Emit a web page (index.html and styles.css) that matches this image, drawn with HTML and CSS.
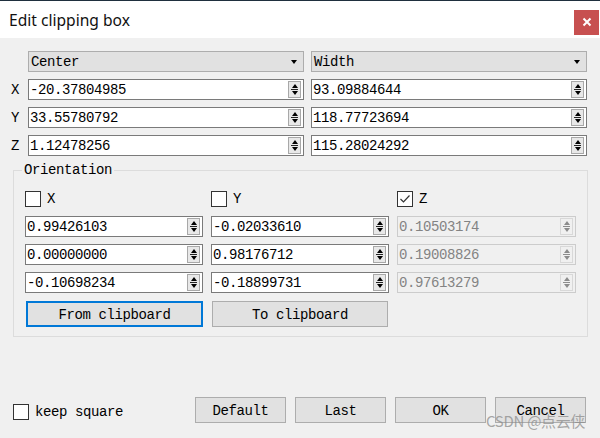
FILE: index.html
```html
<!DOCTYPE html>
<html>
<head>
<meta charset="utf-8">
<link rel="stylesheet" href="styles.css">
</head>
<body>
<div class="window">
  <header class="titlebar">
    <span class="title">Edit clipping box</span>
    <button class="close" aria-label="Close">
      <svg width="10" height="10" viewBox="0 0 10 10"><path d="M1.5 1.5 L8.5 8.5 M8.5 1.5 L1.5 8.5" stroke="#fff" stroke-width="2" fill="none"/></svg>
    </button>
  </header>
  <main class="body">
    <div class="box-grid">
      <span></span>
      <div class="combo"><span>Center</span><span class="caret"></span></div>
      <div class="combo"><span>Width</span><span class="caret"></span></div>

      <span class="axis">X</span>
      <div class="spin"><span class="val">-20.37804985</span><span class="arrows"></span></div>
      <div class="spin"><span class="val">93.09884644</span><span class="arrows"></span></div>

      <span class="axis">Y</span>
      <div class="spin"><span class="val">33.55780792</span><span class="arrows"></span></div>
      <div class="spin"><span class="val">118.77723694</span><span class="arrows"></span></div>

      <span class="axis">Z</span>
      <div class="spin"><span class="val">1.12478256</span><span class="arrows"></span></div>
      <div class="spin"><span class="val">115.28024292</span><span class="arrows"></span></div>
    </div>

    <fieldset class="group">
      <legend>Orientation</legend>
      <div class="orient-grid">
        <label class="check"><span class="box"></span>X</label>
        <label class="check"><span class="box"></span>Y</label>
        <label class="check"><span class="box checked"><svg width="14" height="14" viewBox="0 0 14 14"><path d="M2.5 7 L5.5 10 L11.5 3.5" stroke="#333" stroke-width="1.2" fill="none"/></svg></span>Z</label>

        <div class="spin"><span class="val">0.99426103</span><span class="arrows"></span></div>
        <div class="spin"><span class="val">-0.02033610</span><span class="arrows"></span></div>
        <div class="spin disabled"><span class="val">0.10503174</span><span class="arrows"></span></div>

        <div class="spin"><span class="val">0.00000000</span><span class="arrows"></span></div>
        <div class="spin"><span class="val">0.98176712</span><span class="arrows"></span></div>
        <div class="spin disabled"><span class="val">0.19008826</span><span class="arrows"></span></div>

        <div class="spin"><span class="val">-0.10698234</span><span class="arrows"></span></div>
        <div class="spin"><span class="val">-0.18899731</span><span class="arrows"></span></div>
        <div class="spin disabled"><span class="val">0.97613279</span><span class="arrows"></span></div>

        <button class="btn wide focused">From clipboard</button>
        <button class="btn wide">To clipboard</button>
      </div>
    </fieldset>

    <div class="footer">
      <label class="check"><span class="box"></span>keep square</label>
      <div class="actions">
        <button class="btn">Default</button>
        <button class="btn">Last</button>
        <button class="btn">OK</button>
        <button class="btn">Cancel</button>
      </div>
    </div>
  </main>
  <div class="watermark">CSDN @点云侠</div>
</div>
</body>
</html>
```
FILE: styles.css
```css
* { box-sizing: border-box; }
html, body { margin: 0; padding: 0; }
body {
  width: 600px;
  height: 438px;
  overflow: hidden;
  background: #f0f0f0;
  font-family: "Liberation Mono", "Noto Sans CJK SC", monospace;
  font-size: 14px;
  color: #000;
}
.window {
  position: relative;
  width: 600px;
  height: 438px;
  display: flex;
  flex-direction: column;
}
.titlebar {
  height: 38px;
  flex: none;
  background: #fff;
  border-top: 1px solid #1f2f3e;
  display: flex;
  align-items: center;
  justify-content: space-between;
  padding: 0 1px 0 9px;
}
.title {
  font-family: "Noto Sans", "Open Sans", sans-serif;
  font-size: 15.6px;
  color: #111;
  margin-top: 1px;
}
.close {
  width: 25px;
  height: 25px;
  border: none;
  padding: 0;
  margin-top: 5px;
  background: #c75050;
  display: flex;
  align-items: center;
  justify-content: center;
}
.body {
  flex: 1;
  background: #f0f0f0;
}
.box-grid {
  display: grid;
  grid-template-columns: 21px 276px 276px;
  grid-auto-rows: 21px;
  column-gap: 7px;
  row-gap: 7px;
  padding-top: 13px;
}
.axis {
  align-self: center;
  padding-left: 11px;
  padding-top: 1px;
  letter-spacing: -0.4px;
}
.combo {
  background: #e1e1e1;
  border: 1px solid #adadad;
  display: flex;
  align-items: center;
  justify-content: space-between;
  padding: 1px 6px 0 2px;
  letter-spacing: -0.4px;
}
.caret {
  width: 0;
  height: 0;
  border-left: 3.5px solid transparent;
  border-right: 3.5px solid transparent;
  border-top: 4px solid #000;
  margin-top: -1px;
}
.spin {
  background: #fff;
  border: 1px solid #7a7a7a;
  display: flex;
  align-items: center;
  justify-content: space-between;
  padding: 0 2px 0 1px;
  height: 21px;
}
.val {
  letter-spacing: -0.4px;
  white-space: nowrap;
  padding-top: 1px;
}
.arrows {
  width: 13px;
  height: 17px;
  border: 1px solid #a8a8a8;
  background:
    linear-gradient(#222, #222) center / 7px 1px no-repeat,
    #e8e8e8;
  display: flex;
  flex-direction: column;
  justify-content: space-between;
  align-items: center;
  padding: 2px 0;
}
.arrows::before, .arrows::after {
  content: "";
  width: 0;
  height: 0;
  border-left: 3.5px solid transparent;
  border-right: 3.5px solid transparent;
}
.arrows::before { border-bottom: 4px solid #000; }
.arrows::after { border-top: 4px solid #000; }
.spin.disabled {
  background: #f0f0f0;
  border-color: #cccccc;
  color: #838383;
}
.spin.disabled .arrows {
  border-color: #d8d8d8;
  background:
    linear-gradient(#8c8c8c, #8c8c8c) center / 7px 1px no-repeat,
    #f0f0f0;
}
.spin.disabled .arrows::before { border-bottom-color: #8c8c8c; }
.spin.disabled .arrows::after { border-top-color: #8c8c8c; }

.group {
  margin: 6px 12px 0 13px;
  border: 1px solid #dcdcdc;
  padding: 13px 10px 10px 11px;
  min-width: 0;
}
.group legend {
  padding: 0 2px;
  margin-left: -3px;
  line-height: 16px;
  letter-spacing: -0.4px;
}
.orient-grid {
  display: grid;
  grid-template-columns: 178px 178px 179px;
  grid-template-rows: 18px 21px 21px 21px 26px;
  column-gap: 8px;
  row-gap: 7px;
}
.check {
  display: flex;
  align-items: flex-start;
  gap: 6px;
  letter-spacing: -0.4px;
  line-height: 17px;
}
.box {
  width: 16px;
  height: 16px;
  border: 1px solid #333;
  background: #fff;
  display: flex;
  align-items: center;
  justify-content: center;
  flex: none;
}
.btn {
  font-family: "Liberation Mono", monospace;
  font-size: 14px;
  letter-spacing: -0.4px;
  color: #000;
  background: #e1e1e1;
  border: 1px solid #adadad;
  height: 26px;
  width: 91px;
  padding: 2px 0 0;
}
.btn.wide {
  width: 177px;
  margin-top: 1px;
}
.btn.wide.focused {
  border: 2px solid #0078d7;
  margin-left: 1px;
}
.btn.wide:not(.focused) {
  margin-left: 1px;
  width: 176px;
}
.footer {
  margin-top: 60px;
  display: flex;
  align-items: center;
  justify-content: space-between;
  padding: 0 14px 0 13px;
}
.footer .check {
  margin-top: 4px;
  align-items: center;
}
.actions {
  display: flex;
  gap: 9px;
}
.watermark {
  position: absolute;
  left: 486px;
  top: 410px;
  font-family: "Noto Sans CJK SC", "Noto Sans", sans-serif;
  font-size: 15px;
  color: rgba(140, 140, 140, 0.75);
  letter-spacing: -0.3px;
  pointer-events: none;
}
```
